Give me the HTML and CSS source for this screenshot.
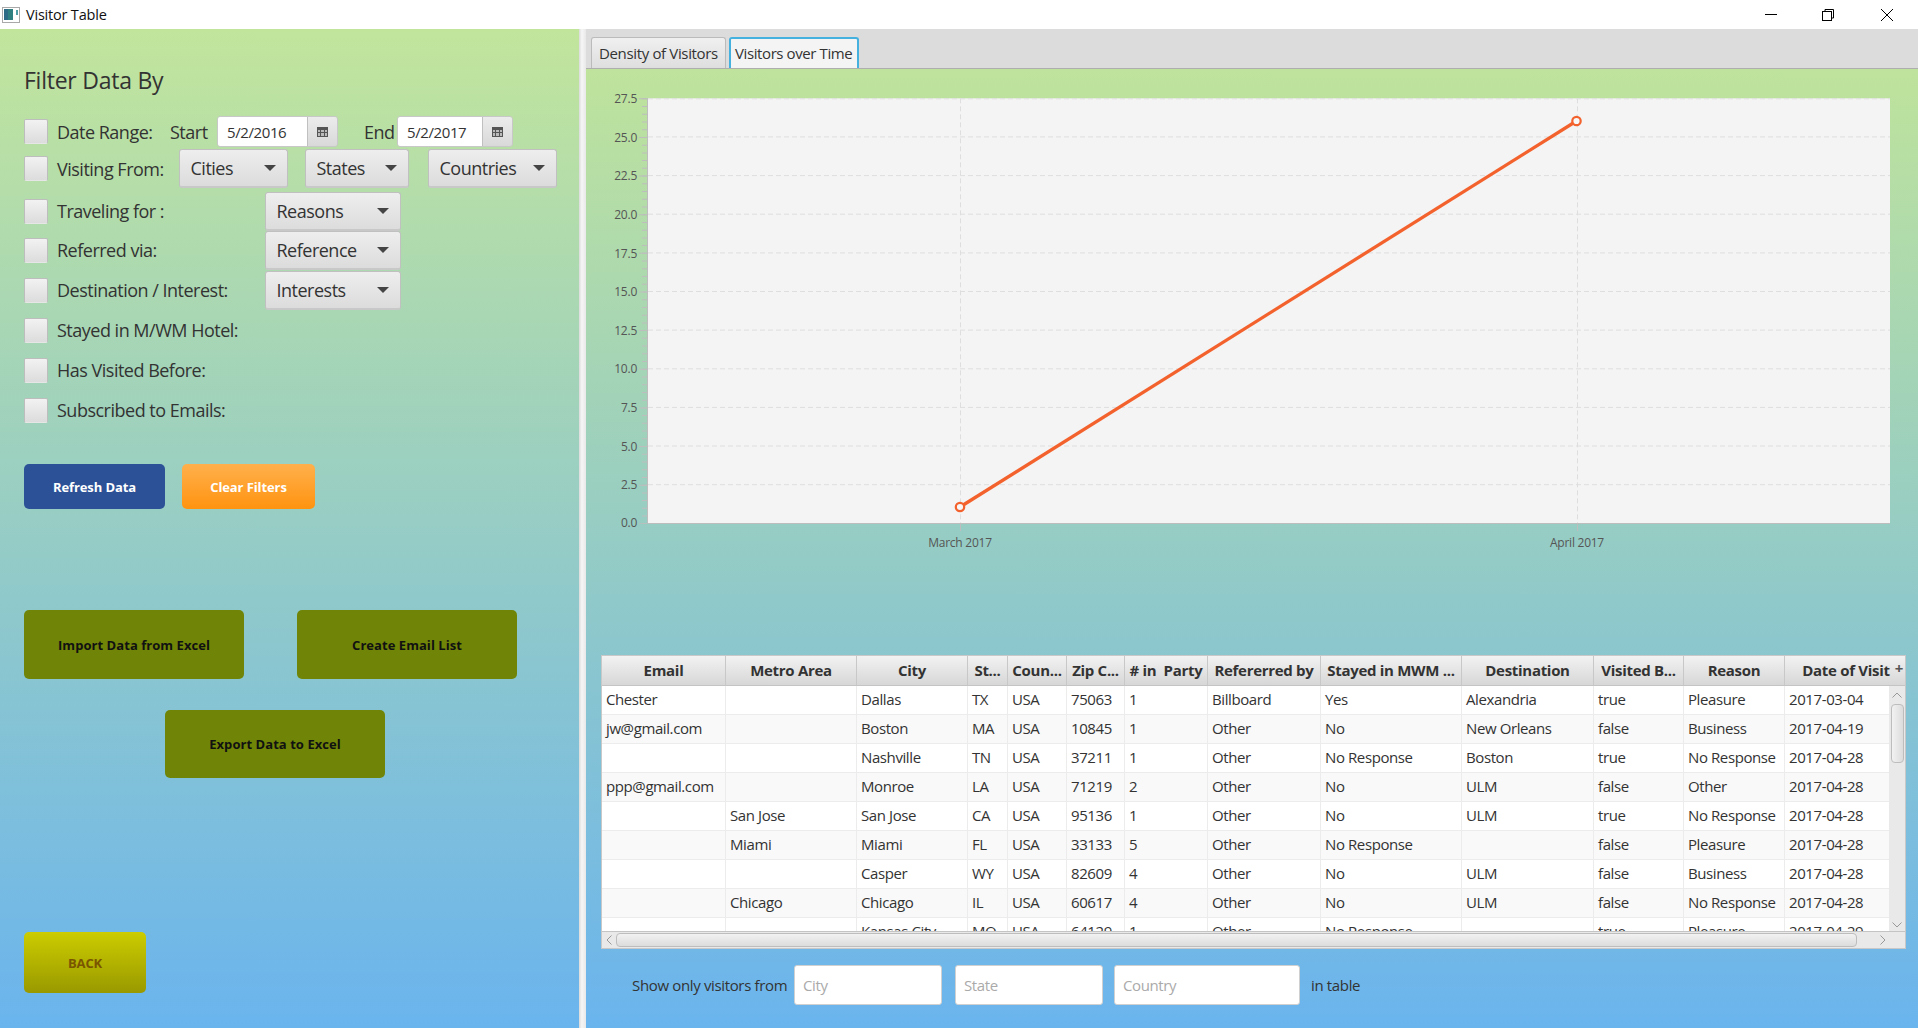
FILE: index.html
```html
<!DOCTYPE html>
<html lang="en">
<head>
    <meta charset="UTF-8">
    <title>Visitor Table</title>
    <link rel="stylesheet" href="styles.css">
</head>
<body>
    <div class="titlebar">
        <svg class="app-icon" width="18" height="16" viewBox="0 0 18 16">
            <rect x="0.5" y="0.5" width="17" height="15" fill="#fff" stroke="#a9a9a9"/>
            <rect x="2" y="2" width="9" height="11" fill="#2f7f80"/>
            <rect x="2" y="2" width="4" height="11" fill="#2c6a86"/>
            <rect x="14" y="3" width="2" height="5" fill="#4f9ea8"/>
        </svg>
        <span class="title-text">Visitor Table</span>
        <div class="window-controls">
            <svg width="12" height="12" viewBox="0 0 12 12"><path d="M0 5.5H12" stroke="#000"/></svg>
            <svg class="win-restore" width="12" height="12" viewBox="0 0 12 12" fill="none" stroke="#000"><path d="M3 2.500V0.500H11.500V9H9.500"/><rect x="0.500" y="2.500" width="9" height="9"/></svg>
            <svg width="12" height="12" viewBox="0 0 12 12"><path d="M0 0L12 12M12 0L0 12" stroke="#000"/></svg>
        </div>
    </div>

    <div class="main">
        <div class="filters">
            <h1 class="filters-title">Filter Data By</h1>

            <div class="row row-date">
                <input type="checkbox" class="check">
                <span class="label label-date">Date Range:</span>
                <span class="label label-start">Start</span>
                <div class="date-field date-start">
                    <input type="text" value="5/2/2016">
                    <span class="date-btn">
                        <svg width="11" height="10" viewBox="0 0 11 10"><path d="M0 0H11V10H0Z" fill="#555"/><path d="M1 3H3V5H1ZM4 3H7V5H4ZM8 3H10V5H8ZM1 6H3V9H1ZM4 6H7V9H4ZM8 6H10V9H8Z" fill="#bbb"/></svg>
                    </span>
                </div>
                <span class="label label-end">End</span>
                <div class="date-field date-end">
                    <input type="text" value="5/2/2017">
                    <span class="date-btn">
                        <svg width="11" height="10" viewBox="0 0 11 10"><path d="M0 0H11V10H0Z" fill="#555"/><path d="M1 3H3V5H1ZM4 3H7V5H4ZM8 3H10V5H8ZM1 6H3V9H1ZM4 6H7V9H4ZM8 6H10V9H8Z" fill="#bbb"/></svg>
                    </span>
                </div>
            </div>

            <div class="row row-from">
                <input type="checkbox" class="check">
                <span class="label label-from">Visiting From:</span>
                <button class="combo combo-cities">Cities</button>
                <button class="combo combo-states">States</button>
                <button class="combo combo-countries">Countries</button>
            </div>

            <div class="row row-combo row-first">
                <input type="checkbox" class="check">
                <span class="label label-wide">Traveling for :</span>
                <button class="combo combo-wide">Reasons</button>
            </div>
            <div class="row row-combo">
                <input type="checkbox" class="check">
                <span class="label label-wide">Referred via:</span>
                <button class="combo combo-wide">Reference</button>
            </div>
            <div class="row row-combo row-dest">
                <input type="checkbox" class="check">
                <span class="label label-wide">Destination / Interest:</span>
                <button class="combo combo-wide">Interests</button>
            </div>

            <div class="row row-plain row-stayed">
                <input type="checkbox" class="check">
                <span class="label">Stayed in M/WM Hotel:</span>
            </div>
            <div class="row row-plain">
                <input type="checkbox" class="check">
                <span class="label">Has Visited Before:</span>
            </div>
            <div class="row row-plain">
                <input type="checkbox" class="check">
                <span class="label">Subscribed to Emails:</span>
            </div>

            <div class="actions">
                <button class="btn btn-refresh">Refresh Data</button>
                <button class="btn btn-clear">Clear Filters</button>
            </div>

            <div class="excel-row">
                <button class="btn btn-olive">Import Data from Excel</button>
                <button class="btn btn-olive">Create Email List</button>
            </div>
            <div class="export-row">
                <button class="btn btn-olive btn-export">Export Data to Excel</button>
            </div>

            <button class="btn btn-back">BACK</button>
        </div>

        <div class="divider"></div>

        <div class="content">
            <div class="tabs">
                <div class="tab">Density of Visitors</div>
                <div class="tab tab-active">Visitors over Time</div>
            </div>

            <div class="tab-body">
                <svg class="chart" width="1332" height="586" viewBox="0 0 1332 586">
                    <rect x="62" y="29.3" width="1242" height="425" fill="#f4f4f4"/>
                    <g stroke="#dedede" stroke-dasharray="5 3">
                        <line x1="62" x2="1304" y1="29.800" y2="29.800"/>
                        <line x1="62" x2="1304" y1="67.900" y2="67.900"/>
                        <line x1="62" x2="1304" y1="106.600" y2="106.600"/>
                        <line x1="62" x2="1304" y1="145.200" y2="145.200"/>
                        <line x1="62" x2="1304" y1="183.900" y2="183.900"/>
                        <line x1="62" x2="1304" y1="222.500" y2="222.500"/>
                        <line x1="62" x2="1304" y1="261.100" y2="261.100"/>
                        <line x1="62" x2="1304" y1="299.800" y2="299.800"/>
                        <line x1="62" x2="1304" y1="338.400" y2="338.400"/>
                        <line x1="62" x2="1304" y1="377" y2="377"/>
                        <line x1="62" x2="1304" y1="415.700" y2="415.700"/>
                        <line x1="374.500" x2="374.500" y1="29.300" y2="454.300"/>
                        <line x1="991.500" x2="991.500" y1="29.300" y2="454.300"/>
                    </g>
                    <line x1="61.500" x2="61.500" y1="29.300" y2="454.300" stroke="#bdbdbd"/>
                    <line x1="62" x2="1304" y1="454.500" y2="454.500" stroke="#bdbdbd"/>
                    <line x1="58.500" x2="58.500" y1="29.300" y2="455" stroke="#bdbdbd" stroke-width="5" stroke-dasharray="1 6.727"/>
                    <line x1="57" x2="57" y1="29.300" y2="455" stroke="#bdbdbd" stroke-width="8" stroke-dasharray="1 37.636"/>
                    <line x1="374.500" x2="374.500" y1="454.300" y2="462" stroke="#bdbdbd"/>
                    <line x1="991.500" x2="991.500" y1="454.300" y2="462" stroke="#bdbdbd"/>
                    <g class="axis-label" text-anchor="end">
                        <text x="51" y="34">27.5</text>
                        <text x="51" y="73">25.0</text>
                        <text x="51" y="111">22.5</text>
                        <text x="51" y="150">20.0</text>
                        <text x="51" y="189">17.5</text>
                        <text x="51" y="227">15.0</text>
                        <text x="51" y="266">12.5</text>
                        <text x="51" y="304">10.0</text>
                        <text x="51" y="343">7.5</text>
                        <text x="51" y="382">5.0</text>
                        <text x="51" y="420">2.5</text>
                        <text x="51" y="458">0.0</text>
                    </g>
                    <g class="axis-label" text-anchor="middle">
                        <text x="374" y="478">March 2017</text>
                        <text x="991" y="478">April 2017</text>
                    </g>
                    <line x1="374" y1="438" x2="990.500" y2="52" stroke="#f3622d" stroke-width="3.300"/>
                    <circle cx="374" cy="438" r="4.200" fill="#f8f8f8" stroke="#f3622d" stroke-width="2.200"/>
                    <circle cx="990.500" cy="52" r="4.200" fill="#f8f8f8" stroke="#f3622d" stroke-width="2.200"/>
                </svg>

                <div class="table-view">
                    <div class="t-row t-head">
                        <div>Email</div><div>Metro Area</div><div>City</div><div>St...</div><div>Coun...</div><div>Zip C...</div><div># in&nbsp; Party</div><div>Refererred by</div><div>Stayed in MWM ...</div><div>Destination</div><div>Visited B...</div><div>Reason</div><div class="t-date">Date of Visit</div><div class="t-plus">+</div>
                    </div>
                    <div class="t-middle">
                        <div class="t-rows">
                            <div class="t-row"><div>Chester</div><div></div><div>Dallas</div><div>TX</div><div>USA</div><div>75063</div><div>1</div><div>Billboard</div><div>Yes</div><div>Alexandria</div><div>true</div><div>Pleasure</div><div>2017-03-04</div></div>
                            <div class="t-row"><div>jw@gmail.com</div><div></div><div>Boston</div><div>MA</div><div>USA</div><div>10845</div><div>1</div><div>Other</div><div>No</div><div>New Orleans</div><div>false</div><div>Business</div><div>2017-04-19</div></div>
                            <div class="t-row"><div></div><div></div><div>Nashville</div><div>TN</div><div>USA</div><div>37211</div><div>1</div><div>Other</div><div>No Response</div><div>Boston</div><div>true</div><div>No Response</div><div>2017-04-28</div></div>
                            <div class="t-row"><div>ppp@gmail.com</div><div></div><div>Monroe</div><div>LA</div><div>USA</div><div>71219</div><div>2</div><div>Other</div><div>No</div><div>ULM</div><div>false</div><div>Other</div><div>2017-04-28</div></div>
                            <div class="t-row"><div></div><div>San Jose</div><div>San Jose</div><div>CA</div><div>USA</div><div>95136</div><div>1</div><div>Other</div><div>No</div><div>ULM</div><div>true</div><div>No Response</div><div>2017-04-28</div></div>
                            <div class="t-row"><div></div><div>Miami</div><div>Miami</div><div>FL</div><div>USA</div><div>33133</div><div>5</div><div>Other</div><div>No Response</div><div></div><div>false</div><div>Pleasure</div><div>2017-04-28</div></div>
                            <div class="t-row"><div></div><div></div><div>Casper</div><div>WY</div><div>USA</div><div>82609</div><div>4</div><div>Other</div><div>No</div><div>ULM</div><div>false</div><div>Business</div><div>2017-04-28</div></div>
                            <div class="t-row"><div></div><div>Chicago</div><div>Chicago</div><div>IL</div><div>USA</div><div>60617</div><div>4</div><div>Other</div><div>No</div><div>ULM</div><div>false</div><div>No Response</div><div>2017-04-28</div></div>
                            <div class="t-row"><div></div><div></div><div>Kansas City</div><div>MO</div><div>USA</div><div>64129</div><div>1</div><div>Other</div><div>No Response</div><div></div><div>true</div><div>Pleasure</div><div>2017-04-29</div></div>
                        </div>
                        <div class="vscroll">
                            <svg width="10" height="6" viewBox="0 0 10 6"><path d="M0.500 5.500L5 1L9.500 5.500" fill="none" stroke="#999"/></svg>
                            <div class="vthumb"></div>
                            <svg class="vdown" width="10" height="6" viewBox="0 0 10 6"><path d="M0.500 0.500L5 5L9.500 0.500" fill="none" stroke="#999"/></svg>
                        </div>
                    </div>
                    <div class="hscroll">
                        <svg width="6" height="10" viewBox="0 0 6 10"><path d="M5.500 0.500L1 5L5.500 9.500" fill="none" stroke="#999"/></svg>
                        <div class="hthumb"></div>
                        <svg width="6" height="10" viewBox="0 0 6 10"><path d="M0.500 0.500L5 5L0.500 9.500" fill="none" stroke="#999"/></svg>
                    </div>
                </div>

                <div class="table-filter">
                    <span class="filter-label">Show only visitors from</span>
                    <input type="text" class="field field-city" placeholder="City">
                    <input type="text" class="field field-state" placeholder="State">
                    <input type="text" class="field field-country" placeholder="Country">
                    <span class="filter-end">in table</span>
                </div>
            </div>
        </div>
    </div>
</body>
</html>
```

FILE: styles.css
```css
* {
    box-sizing: border-box;
}

body {
    margin: 0;
    width: 1918px;
    height: 1028px;
    overflow: hidden;
    background-color: white;
    font-family: "Open Sans", "Noto Sans", sans-serif;
    color: #333;
}

/* title bar */
.titlebar {
    display: flex;
    align-items: center;
    height: 29px;
    padding-left: 2px;
    background-color: white;
}

.app-icon {
    margin-right: 6px;
}

.title-text {
    font-size: 14.500px;
    letter-spacing: -0.2px;
    color: #111;
}

.window-controls {
    display: flex;
    gap: 46px;
    margin-left: auto;
    margin-right: 25px;
}

.win-restore {
    margin: 0 1px 0 -1px;
}

.main {
    display: flex;
    height: 999px;
}

/* left side */
.filters {
    width: 579px;
    padding-left: 24px;
    background: linear-gradient(#c2e59c, #6ab4ee);
}

.filters-title {
    margin: 0;
    height: 87px;
    padding-top: 34px;
    font-size: 23px;
    line-height: 34px;
    font-weight: normal;
    letter-spacing: -0.25px;
}

.row {
    display: flex;
    align-items: center;
}

.row-date {
    height: 31px;
}

.row-from {
    height: 39px;
    margin-top: 2px;
}

.row-combo {
    height: 38px;
    margin-top: 1px;
}

.row-first {
    margin-top: 4px;
}

.row-dest {
    margin-top: 2px;
}

.row-plain {
    height: 26px;
    margin-top: 14px;
}

.row-stayed {
    margin-top: 8px;
}

.check {
    appearance: none;
    flex: none;
    width: 24px;
    height: 25px;
    margin: 0 9px 0 0;
    background: linear-gradient(#f2f2f2, #dcdcdc);
    border: 1px solid #bdbdbd;
    border-bottom-color: #e6e6e6;
    border-radius: 2px;
}

.label {
    font-size: 18px;
    letter-spacing: -0.5px;
    white-space: nowrap;
}

.label-date {
    width: 113px;
}

.label-start {
    width: 47px;
}

.label-end {
    width: 33px;
    margin-left: 26px;
}

.label-from {
    width: 121.500px;
}

.label-wide {
    width: 207.500px;
}

.date-field {
    display: flex;
    height: 31px;
    border-radius: 3px;
    overflow: hidden;
    border: 1px solid #c8c8c8;
}

.date-start {
    width: 121px;
}

.date-end {
    width: 116px;
}

.date-field input {
    flex: 1;
    min-width: 0;
    padding: 0 0 0 9px;
    border: none;
    outline: none;
    font-family: inherit;
    font-size: 15px;
    letter-spacing: -0.4px;
    color: #333;
}

.date-btn {
    display: flex;
    flex: none;
    align-items: center;
    justify-content: center;
    width: 30px;
    background: linear-gradient(#ececec, #d9d9d9);
    border-left: 1px solid #c0c0c0;
}

.combo {
    position: relative;
    flex: none;
    height: 39px;
    padding: 0 0 0 11px;
    text-align: left;
    background: linear-gradient(#eeeeee, #dcdcdc);
    border: 1px solid #c0c0c0;
    border-bottom: 2px solid #c8c8c8;
    border-radius: 3px;
    font-family: inherit;
    font-size: 18px;
    letter-spacing: -0.5px;
    color: #333;
}

.combo::after {
    content: "";
    position: absolute;
    right: 11px;
    top: 15px;
    border-left: 6px solid transparent;
    border-right: 6px solid transparent;
    border-top: 6px solid #444;
}

.combo-cities {
    width: 109px;
}

.combo-states {
    width: 104px;
    margin-left: 17px;
}

.combo-countries {
    width: 129px;
    margin-left: 19px;
}

.combo-wide {
    width: 136px;
}

.btn {
    flex: none;
    border: none;
    border-radius: 5px;
    font-family: inherit;
    font-size: 13px;
    font-weight: bold;
    letter-spacing: -0.1px;
}

.actions {
    display: flex;
    gap: 17px;
    margin-top: 41px;
}

.btn-refresh {
    width: 141px;
    height: 45px;
    background-color: #2c5197;
    color: white;
}

.btn-clear {
    width: 133px;
    height: 45px;
    background: linear-gradient(#ffb04c, #ff9310);
    color: white;
}

.excel-row {
    display: flex;
    gap: 53px;
    margin-top: 101px;
}

.btn-olive {
    width: 220px;
    height: 69px;
    background-color: #708507;
    color: #111;
    letter-spacing: 0.05px;
}

.export-row {
    margin-top: 31px;
    padding-left: 141px;
}

.btn-export {
    height: 68px;
}

.btn-back {
    display: block;
    width: 122px;
    height: 61px;
    margin-top: 154px;
    background: linear-gradient(#cccc00, #999900);
    color: #7a5500;
}

.divider {
    width: 7px;
    background: linear-gradient(to right, #dadada, #f6f6f6 40%, #e8e8e8);
}

/* right side */
.content {
    display: flex;
    flex: 1;
    flex-direction: column;
    min-width: 0;
}

.tabs {
    display: flex;
    align-items: flex-end;
    gap: 3px;
    height: 40px;
    padding: 8px 0 0 5px;
    background-color: #dcdcdc;
    border-bottom: 1px solid #aeaeae;
}

.tab {
    height: 31px;
    padding: 0 7px;
    line-height: 30px;
    font-size: 15px;
    letter-spacing: -0.35px;
    white-space: nowrap;
    background: linear-gradient(#f0f0f0, #dedede);
    border: 1px solid #bbb;
    border-bottom: none;
    border-radius: 3px 3px 0 0;
}

.tab:first-child {
    width: 135px;
}

.tab-active {
    width: 130px;
    background: #f4f4f4;
    border: 2px solid #45b1df;
    border-bottom: none;
    padding: 0 4px;
    line-height: 28px;
    letter-spacing: -0.4px;
}

.tab-body {
    flex: 1;
    background: linear-gradient(#bfe39c, #6ab4ee);
}

.chart {
    display: block;
}

.axis-label {
    font-size: 12px;
    letter-spacing: -0.25px;
    fill: #555;
}

/* visitor table */
.table-view {
    --cols: 124px 131px 111px 40px 59px 58px 83px 113px 141px 132px 90px 101px 106px;
    width: 1305px;
    height: 294px;
    margin-left: 15px;
    border: 1px solid #c8c8c8;
    background-color: #e9e9e9;
}

.t-row {
    display: grid;
    grid-template-columns: var(--cols);
    height: 29px;
    font-size: 15px;
    letter-spacing: -0.4px;
    line-height: 26px;
    background-color: white;
    border-bottom: 1px solid #ececec;
}

.t-row:nth-child(even) {
    background-color: #f9f9f9;
}

.t-row > div {
    padding-left: 4px;
    border-right: 1px solid #ececec;
    white-space: nowrap;
    overflow: hidden;
}

.t-head {
    grid-template-columns: var(--cols) 16px;
    height: 30px;
    line-height: 29px;
    font-weight: bold;
    letter-spacing: -0.3px;
    background: linear-gradient(#f2f2f2, #d7d7d7);
    border-bottom: 1px solid #c4c4c4;
}

.t-head > div {
    padding: 0;
    text-align: center;
    border-right: 1px solid #c8c8c8;
}

/* the last column runs on under the + corner */
.t-head > .t-date {
    padding-left: 16px;
    border-right: none;
}

.t-head > .t-plus {
    border-right: none;
    color: #555;
    line-height: 24px;
}

.t-middle {
    display: flex;
    height: 245px;
}

.t-rows {
    flex: 1;
    overflow: hidden;
}

.vscroll {
    display: flex;
    flex: none;
    flex-direction: column;
    align-items: center;
    width: 16px;
    padding-top: 6px;
    background-color: #e9e9e9;
}

.vthumb {
    width: 13px;
    height: 59px;
    margin-top: 6px;
    background: linear-gradient(to right, #f2f2f2, #dcdcdc);
    border: 1px solid #bdbdbd;
    border-radius: 4px;
}

.vdown {
    margin-top: auto;
    margin-bottom: 3px;
}

.hscroll {
    display: flex;
    align-items: center;
    height: 17px;
    padding: 0 0 0 4px;
    background-color: #e9e9e9;
    border-top: 1px solid #c4c4c4;
}

.hthumb {
    width: 1241px;
    height: 14px;
    margin: 0 23px 0 4px;
    background: linear-gradient(#f2f2f2, #dcdcdc);
    border: 1px solid #bdbdbd;
    border-radius: 4px;
}

/* under the table */
.table-filter {
    display: flex;
    align-items: center;
    height: 71px;
    padding: 0 0 0 46px;
}

.filter-label,
.filter-end {
    font-size: 15px;
    letter-spacing: -0.35px;
    white-space: nowrap;
}

.filter-label {
    width: 162px;
}

.field {
    height: 40px;
    padding: 0 0 0 8px;
    background-color: white;
    border: 1px solid #d0d0d0;
    border-radius: 3px;
    font-family: inherit;
    font-size: 15px;
    letter-spacing: -0.4px;
}

.field::placeholder {
    color: #aaa;
}

.field-city {
    width: 148px;
}

.field-state {
    width: 148px;
    margin-left: 13px;
}

.field-country {
    width: 186px;
    margin-left: 11px;
}

.filter-end {
    margin-left: 11px;
}
```
